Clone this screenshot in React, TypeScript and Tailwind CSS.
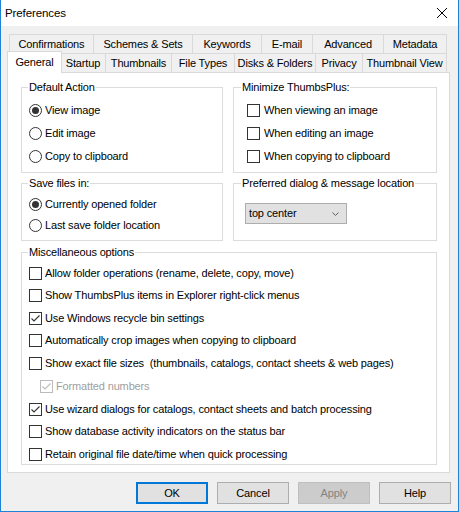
import React from "react";

function Radio({ checked, label }: { checked?: boolean; label: string }) {
  return (
    <div className="flex items-center">
      <span className="ml-[1px] w-[13px] h-[13px] rounded-full border border-[#333333] bg-white flex items-center justify-center">
        {checked && <span className="w-[7px] h-[7px] rounded-full bg-[#333333]" />}
      </span>
      <span className="ml-[3px]">{label}</span>
    </div>
  );
}

function Check({ checked, disabled }: { checked?: boolean; disabled?: boolean }) {
  return (
    <span
      className={
        disabled
          ? "w-[13px] h-[13px] border border-[#bcbcbc] bg-white flex items-center justify-center shrink-0"
          : "w-[13px] h-[13px] border border-[#333333] bg-white flex items-center justify-center shrink-0"
      }
    >
      {checked && (
        <svg width="11" height="11" viewBox="0 0 11 11">
          <polyline
            points="1.5,5.5 4,8 9.5,2.5"
            fill="none"
            stroke={disabled ? "#bcbcbc" : "#333333"}
            strokeWidth="1.1"
          />
        </svg>
      )}
    </span>
  );
}

const row1 = [
  { label: "Confirmations", w: "w-[84px]" },
  { label: "Schemes & Sets", w: "w-[99px]" },
  { label: "Keywords", w: "w-[69px]" },
  { label: "E-mail", w: "w-[51px]" },
  { label: "Advanced", w: "w-[71px]" },
  { label: "Metadata", w: "w-[64px] border-r" },
];

const row2 = [
  { label: "Startup", w: "w-[45px]" },
  { label: "Thumbnails", w: "w-[66px]" },
  { label: "File Types", w: "w-[63px]" },
  { label: "Disks & Folders", w: "w-[81px]" },
  { label: "Privacy", w: "w-[47px]" },
  { label: "Thumbnail View", w: "w-[85px] border-r" },
];

const misc: { label: string; h: string; checked?: boolean; sub?: boolean }[] = [
  { label: "Allow folder operations (rename, delete, copy, move)", h: "h-[22px]" },
  { label: "Show ThumbsPlus items in Explorer right-click menus", h: "h-[23px]" },
  { label: "Use Windows recycle bin settings", h: "h-[22px]", checked: true },
  { label: "Automatically crop images when copying to clipboard", h: "h-[23px]" },
  { label: "Show exact file sizes \u00a0(thumbnails, catalogs, contact sheets & web pages)", h: "h-[23px]" },
  { label: "Formatted numbers", h: "h-[23px]", checked: true, sub: true },
  { label: "Use wizard dialogs for catalogs, contact sheets and batch processing", h: "h-[22px]", checked: true },
  { label: "Show database activity indicators on the status bar", h: "h-[23px]" },
  { label: "Retain original file date/time when quick processing", h: "h-[22px]" },
];

export default function App() {
  return (
    <div className="w-[459px] h-[512px] border-l border-r border-b border-[#1c83d6] bg-[#f0f0f0] flex flex-col font-['Liberation_Sans',Arial,sans-serif] text-[11px] tracking-[-0.15px] leading-[15px] text-black">
      {/* Title bar */}
      <div className="h-[26px] bg-white flex items-center justify-between pl-[4px] pr-[11px] shrink-0">
        <span className="text-[11.5px] tracking-[-0.1px]">Preferences</span>
        <svg width="10" height="10" viewBox="0 0 10 10">
          <line x1="0" y1="0" x2="10" y2="10" stroke="#000" strokeWidth="1" />
          <line x1="10" y1="0" x2="0" y2="10" stroke="#000" strokeWidth="1" />
        </svg>
      </div>

      {/* Tabs */}
      <div className="mt-[8px] flex ml-[8px] h-[19px]">
        {row1.map((t) => (
          <div
            key={t.label}
            className={`${t.w} border-t border-l border-[#d9d9d9] flex items-center justify-center`}
          >
            {t.label}
          </div>
        ))}
      </div>
      <div className="flex ml-[8px] h-[19px] relative z-10">
        <div className="relative z-10 -ml-[2px] -mr-[2px] -mt-[2px] w-[55px] h-[22px] bg-white border-t border-l border-r border-[#d9d9d9] flex items-center justify-center">
          General
        </div>
        {row2.map((t) => (
          <div
            key={t.label}
            className={`${t.w} h-[19px] border-t border-l border-[#d9d9d9] flex items-center justify-center`}
          >
            {t.label}
          </div>
        ))}
      </div>

      {/* Panel */}
      <div className="ml-[6px] w-[443px] h-[401px] bg-white border border-[#d9d9d9] pt-[7px] pl-[13px] shrink-0">
        <div className="grid grid-cols-[202px_204px] gap-x-[10px] gap-y-[3px]">
          <fieldset className="border border-[#dcdcdc] pl-[6px] h-[93px]">
            <legend className="px-[1px]">Default Action</legend>
            <div className="pt-[4px] flex flex-col [&>div]:h-[23px]">
              <Radio checked label="View image" />
              <Radio label="Edit image" />
              <Radio label="Copy to clipboard" />
            </div>
          </fieldset>
          <fieldset className="border border-[#dcdcdc] pl-[7px] h-[93px]">
            <legend className="px-[1px]">Minimize ThumbsPlus:</legend>
            <div className="pt-[4px] flex flex-col">
              {["When viewing an image", "When editing an image", "When copying to clipboard"].map((l) => (
                <div key={l} className="h-[23px] flex items-center ml-[6px]">
                  <Check />
                  <span className="ml-[4px]">{l}</span>
                </div>
              ))}
            </div>
          </fieldset>
          <fieldset className="border border-[#dcdcdc] pl-[6px] h-[65px]">
            <legend className="px-[1px]">Save files in:</legend>
            <div className="pt-[3px] flex flex-col [&>div]:h-[21px]">
              <Radio checked label="Currently opened folder" />
              <Radio label="Last save folder location" />
            </div>
          </fieldset>
          <fieldset className="border border-[#dcdcdc] pl-[7px] h-[65px]">
            <legend className="px-[1px]">Preferred dialog &amp; message location</legend>
            <div className="mt-[12px] ml-[4px] w-[102px] h-[21px] border border-[#adadad] bg-[#e1e1e1] flex items-center justify-between pl-[3px] pr-[7px]">
              <span>top center</span>
              <svg width="7" height="4" viewBox="0 0 7 4">
                <polyline points="0.5,0.5 3.5,3.5 6.5,0.5" fill="none" stroke="#606060" strokeWidth="1" />
              </svg>
            </div>
          </fieldset>
        </div>

        <fieldset className="mt-[4px] w-[416px] h-[220px] border border-[#dcdcdc] pl-[6px]">
          <legend className="px-[1px]">Miscellaneous options</legend>
          <div className="pt-[2px] flex flex-col">
            {misc.map((m) => (
              <div key={m.label} className={`${m.h} flex items-center`}>
                <span className={m.sub ? "ml-[12px]" : "ml-[1px]"}>
                  <Check checked={m.checked} disabled={m.sub} />
                </span>
                <span className={m.sub ? "ml-[3px] text-[#a0a0a0]" : "ml-[3px]"}>{m.label}</span>
              </div>
            ))}
          </div>
        </fieldset>
      </div>

      {/* Buttons */}
      <div className="mt-[9px] flex justify-end gap-[9px] pr-[7px]">
        <button className="w-[72px] h-[22px] border-2 border-[#0078d7] bg-[#e1e1e1]">OK</button>
        <button className="w-[72px] h-[22px] border border-[#adadad] bg-[#e1e1e1]">Cancel</button>
        <button className="w-[72px] h-[22px] border border-[#bfbfbf] bg-[#cccccc] text-[#838383]">Apply</button>
        <button className="w-[72px] h-[22px] border border-[#adadad] bg-[#e1e1e1]">Help</button>
      </div>
    </div>
  );
}
